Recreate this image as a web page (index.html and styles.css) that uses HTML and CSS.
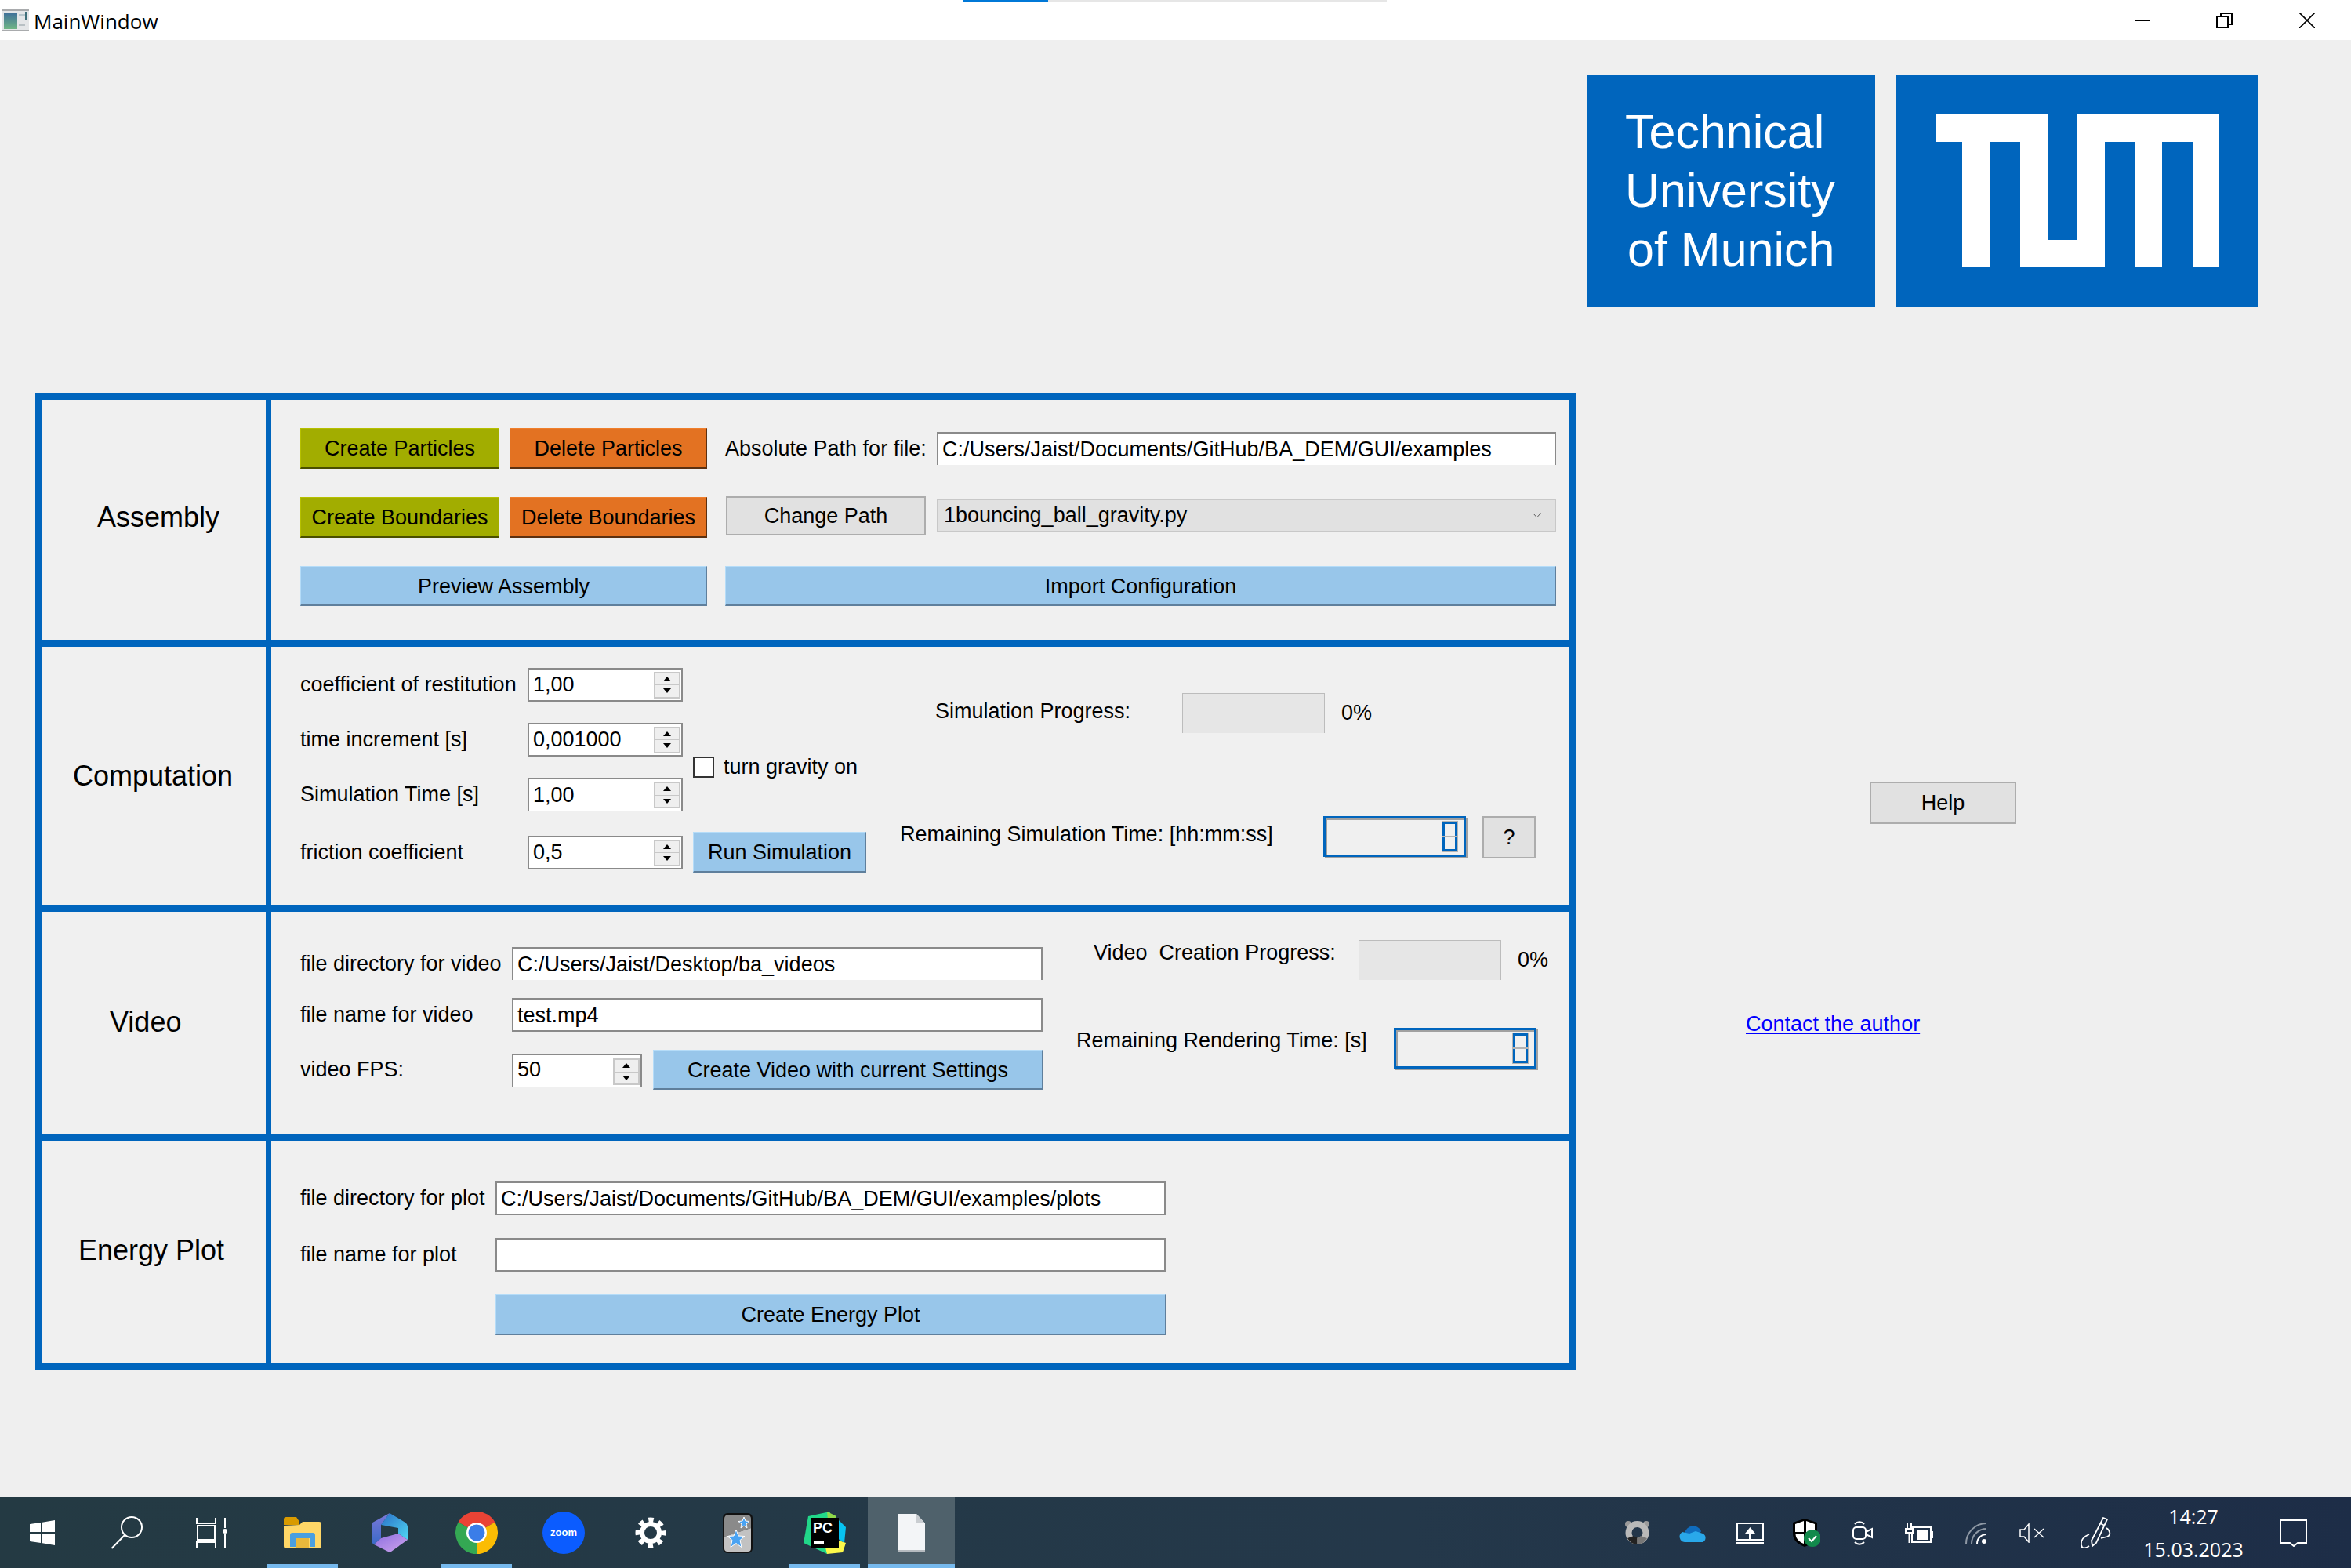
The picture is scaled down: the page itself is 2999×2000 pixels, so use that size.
FILE: index.html
```html
<!DOCTYPE html>
<html lang="en">
<head>
    <meta charset="UTF-8">
    <title>MainWindow</title>
    <link rel="stylesheet" href="styles.css">
</head>
<body>
    <div class="top-strip"><span class="strip-blue"></span><span class="strip-grey"></span></div>

    <header class="titlebar">
        <svg class="app-icon" width="35" height="29" viewBox="0 0 35 29">
            <defs><linearGradient id="appGrad" x1="0" y1="0" x2="0" y2="1"><stop offset="0" stop-color="#3f6f9a"/><stop offset="1" stop-color="#6fb585"/></linearGradient></defs>
            <rect width="35" height="29" fill="#e4e6e8"/>
            <rect width="35" height="3" fill="#a9abad"/>
            <rect y="27" width="35" height="2" fill="#a9abad"/>
            <rect x="3" y="5" width="17" height="21" fill="url(#appGrad)"/>
            <rect x="22" y="7" width="9" height="2" fill="#b8c6cc"/>
            <rect x="30" y="4" width="3" height="11" fill="#3f6f7a"/>
            <rect x="22" y="20" width="8" height="2" fill="#b8c0c4"/>
        </svg>
        <span class="window-title">MainWindow</span>
        <div class="window-controls">
            <span class="win-btn"><svg width="20" height="20" viewBox="0 0 20 20"><path d="M0 10h20" stroke="#000" stroke-width="2"/></svg></span>
            <span class="win-btn"><svg width="21" height="20" viewBox="0 0 21 20" fill="none" stroke="#000" stroke-width="2"><rect x="1" y="5" width="14" height="14"/><path d="M6 5V1h14v14h-5"/></svg></span>
            <span class="win-btn"><svg width="20" height="20" viewBox="0 0 20 20"><path d="M0 0l20 20M20 0L0 20" stroke="#000" stroke-width="1.6"/></svg></span>
        </div>
    </header>

    <main class="client">
        <div class="logos">
            <div class="logo-text">Technical<br>University<br><span class="logo-last">of Munich</span></div>
            <div class="logo-mark">
                <svg width="462" height="295" viewBox="0 0 462 295">
                    <path fill="#fff" d="M50 50H193V210H231V50H412V245H379V85H339V245H305V85H266V245H158V85H119V245H84V85H50Z"/>
                </svg>
            </div>
        </div>

        <div class="workspace">
            <div class="panel">
                <section class="section sec-assembly">
                    <div class="sec-title title-assembly">Assembly</div>
                    <div class="sec-body assembly-grid">
                        <button class="btn btn-green">Create Particles</button>
                        <button class="btn btn-orange">Delete Particles</button>
                        <div class="label path-label">Absolute Path for file:</div>
                        <div class="field path-field">C:/Users/Jaist/Documents/GitHub/BA_DEM/GUI/examples</div>

                        <button class="btn btn-green">Create Boundaries</button>
                        <button class="btn btn-orange">Delete Boundaries</button>
                        <button class="btn btn-grey change-path">Change Path</button>
                        <div class="combo">1bouncing_ball_gravity.py
                            <svg width="11" height="7" viewBox="0 0 11 7"><path d="M.5.5l5 5.500 5-5.500" fill="none" stroke="#555" stroke-width="1"/></svg>
                        </div>

                        <button class="btn btn-blue preview">Preview Assembly</button>
                        <button class="btn btn-blue import">Import Configuration</button>
                    </div>
                </section>

                <section class="section sec-computation">
                    <div class="sec-title">Computation</div>
                    <div class="sec-body comp-body">
                        <div class="comp-grid">
                            <div class="label">coefficient of restitution</div>
                            <div class="spin"><span>1,00</span><div class="spin-btns"><i class="up"></i><i class="down"></i></div></div>

                            <div class="label">time increment [s]</div>
                            <div class="spin"><span>0,001000</span><div class="spin-btns"><i class="up"></i><i class="down"></i></div></div>
                            <label class="gravity"><span class="check"></span>turn gravity on</label>

                            <div class="label">Simulation Time [s]</div>
                            <div class="spin spin-cut"><span>1,00</span><div class="spin-btns"><i class="up"></i><i class="down"></i></div></div>

                            <div class="label">friction coefficient</div>
                            <div class="spin spin-last"><span>0,5</span><div class="spin-btns"><i class="up"></i><i class="down"></i></div></div>
                            <button class="btn btn-blue run">Run Simulation</button>
                        </div>
                        <div class="comp-status">
                            <div class="status-row sim-progress">
                                <div class="label">Simulation Progress:</div>
                                <div class="progress"></div>
                                <div class="percent">0%</div>
                            </div>
                            <div class="status-row sim-remaining">
                                <div class="label">Remaining Simulation Time: [hh:mm:ss]</div>
                                <div class="lcd"><div class="lcd-digit"><b></b><b></b></div></div>
                                <button class="btn btn-grey question">?</button>
                            </div>
                        </div>
                    </div>
                </section>

                <section class="section sec-video">
                    <div class="sec-title title-video">Video</div>
                    <div class="sec-body video-body">
                        <div class="video-grid">
                            <div class="label">file directory for video</div>
                            <div class="field field-cut wide">C:/Users/Jaist/Desktop/ba_videos</div>
                            <div class="label">file name for video</div>
                            <div class="field wide">test.mp4</div>
                            <div class="label">video FPS:</div>
                            <div class="spin spin-cut fps"><span>50</span><div class="spin-btns"><i class="up"></i><i class="down"></i></div></div>
                            <button class="btn btn-blue">Create Video with current Settings</button>
                        </div>
                        <div class="video-status">
                            <div class="status-row video-progress">
                                <div class="label">Video&nbsp; Creation Progress:</div>
                                <div class="progress"></div>
                                <div class="percent">0%</div>
                            </div>
                            <div class="status-row video-remaining">
                                <div class="label">Remaining Rendering Time: [s]</div>
                                <div class="lcd"><div class="lcd-digit"><b></b><b></b></div></div>
                            </div>
                        </div>
                    </div>
                </section>

                <section class="section sec-energy">
                    <div class="sec-title title-energy">Energy Plot</div>
                    <div class="sec-body energy-grid">
                        <div class="label">file directory for plot</div>
                        <div class="field">C:/Users/Jaist/Documents/GitHub/BA_DEM/GUI/examples/plots</div>
                        <div class="label">file name for plot</div>
                        <div class="field"></div>
                        <button class="btn btn-blue energy-btn">Create Energy Plot</button>
                    </div>
                </section>
            </div>

            <aside class="side">
                <button class="btn btn-grey help">Help</button>
                <a class="contact" href="#">Contact the author</a>
            </aside>
        </div>
    </main>

    <footer class="taskbar">
        <div class="task-start">
            <span class="slot-fixed"><svg width="32" height="32" viewBox="0 0 32 32" fill="#fff"><path d="M0 5l14-2v12H0zM16 2.700L32 0v15H16zM0 17h14v12l-14-2zM16 17h16v15l-16-2.700z"/></svg></span>
            <span class="slot-fixed"><svg width="42" height="42" viewBox="0 0 42 42" fill="none" stroke="#fff" stroke-width="2"><circle cx="27" cy="14" r="13"/><path d="M18 24L1.500 41"/></svg></span>
            <span class="slot-fixed"><svg width="40" height="40" viewBox="0 0 40 40" fill="none" stroke="#fff" stroke-width="2"><path d="M1 1v7h24V1M2 11h22v18H2zM1 39v-7h24v7M37 1v13M37 22v17"/><circle cx="37" cy="18" r="3" fill="#fff" stroke="none"/></svg></span>
        </div>
        <div class="task-apps">
            <span class="slot running">
                <svg width="48" height="40" viewBox="0 0 48 40">
                    <path fill="#d99b00" d="M0 3a3 3 0 0 1 3-3h13l4 6v4H0z"/>
                    <path fill="#ffd767" d="M0 11l20-1 4-4h21a3 3 0 0 1 3 3v28a3 3 0 0 1-3 3H3a3 3 0 0 1-3-3z"/>
                    <path fill="#4a9fe0" d="M8 38V23a3 3 0 0 1 3-3h26a3 3 0 0 1 3 3v15h-7V27H15v11z"/>
                    <rect x="16" y="27" width="16" height="13" fill="#e8b83c"/>
                </svg>
            </span>
            <span class="slot">
                <svg width="46" height="50" viewBox="0 0 46 50">
                    <defs>
                        <linearGradient id="ribbonA" x1="0" y1="0" x2="1" y2="1"><stop offset="0" stop-color="#2a6fc8"/><stop offset="1" stop-color="#4fd6f2"/></linearGradient>
                        <linearGradient id="ribbonB" x1="0" y1="0" x2="0" y2="1"><stop offset="0" stop-color="#7c78d8"/><stop offset="1" stop-color="#3a6ac8"/></linearGradient>
                        <linearGradient id="ribbonC" x1="0" y1="0" x2="1" y2="1"><stop offset="0" stop-color="#8a6ee0"/><stop offset="1" stop-color="#cfa4ec"/></linearGradient>
                    </defs>
                    <path fill="url(#ribbonB)" d="M3 11L23 0 12 15V32L3 40Q0 38 0 35V15Q0 12 3 11z"/>
                    <path fill="url(#ribbonA)" d="M23 0L43 12Q46 14 46 17V34L34 26V19L12 15z"/>
                    <path fill="url(#ribbonC)" d="M12 32L34 26 46 34 25 49Q23 50 21 49L3 40z"/>
                </svg>
            </span>
            <span class="slot running">
                <svg width="54" height="54" viewBox="0 0 54 54">
                    <path fill="#ea4335" d="M27 27L3.600 13.500A27 27 0 0 1 50.400 13.500z"/>
                    <path fill="#fbbc04" d="M27 27L50.400 13.500A27 27 0 0 1 27 54z"/>
                    <path fill="#34a853" d="M27 27L27 54A27 27 0 0 1 3.600 13.500z"/>
                    <circle cx="27" cy="27" r="13" fill="#fff"/>
                    <circle cx="27" cy="27" r="10.500" fill="#3b7de8"/>
                </svg>
            </span>
            <span class="slot">
                <svg width="54" height="54" viewBox="0 0 54 54">
                    <circle cx="27" cy="27" r="27" fill="#0b5cff"/>
                    <text x="27" y="31" text-anchor="middle" class="zoom-text">zoom</text>
                </svg>
            </span>
            <span class="slot">
                <svg width="40" height="40" viewBox="0 0 40 40" fill="none" stroke="#fff">
                    <circle cx="20" cy="20" r="11" stroke-width="6"/>
                    <circle cx="20" cy="20" r="16" stroke-width="7" stroke-dasharray="6.280 6.280" stroke-dashoffset="3.140"/>
                </svg>
            </span>
            <span class="slot">
                <svg width="38" height="51" viewBox="0 0 38 51">
                    <rect width="38" height="51" rx="6" fill="#111"/>
                    <path d="M2 24V7a5 5 0 0 1 5-5h24a5 5 0 0 1 5 5v12L2 30z" fill="#8a8a8a"/>
                    <path d="M2 30l34-11v26a4 4 0 0 1-4 4H6a4 4 0 0 1-4-4z" fill="#c2c2c2"/>
                    <path fill="#4aa3f2" stroke="#fff" stroke-width="1" d="M27 5l2 5 5 .5-4 3.500 1 5-4-3-4 3 1-5-4-3.500 5-.5zM17 21l3 8 8 .5-6 5 2 9-7-5-7 5 2-9-6-5 8-.5z"/>
                </svg>
            </span>
            <span class="slot running">
                <svg width="54" height="54" viewBox="0 0 54 54">
                    <path fill="#21d789" d="M6 6L34 0l-4 54L0 40z"/>
                    <path fill="#fcf84a" d="M24 30l30 10-4 12-20 2z"/>
                    <path fill="#07c3f2" d="M40 6l14 14-2 20-12-8z"/>
                    <path fill="#8fd84a" d="M30 0l12 6v16l-10 0z"/>
                    <rect x="9" y="8" width="36" height="38" fill="#000"/>
                    <text x="12" y="27" class="pc-text">PC</text>
                    <rect x="13" y="38" width="13" height="3" fill="#fff"/>
                </svg>
            </span>
            <span class="slot active">
                <svg width="35" height="48" viewBox="0 0 35 48">
                    <path fill="#f3f5f7" d="M0 0h24l11 12v36H0z"/>
                    <path fill="#c9cdd1" d="M24 0l11 12H24z"/>
                    <rect y="46" width="35" height="2" fill="#b6bbc0"/>
                </svg>
            </span>
        </div>
        <div class="tray">
            <span class="tray-slot">
                <svg width="33" height="30" viewBox="0 0 33 30">
                    <circle cx="5" cy="4" r="4" fill="#9a9a9a"/><circle cx="28" cy="4" r="4" fill="#9a9a9a"/>
                    <circle cx="16.500" cy="15" r="11" fill="none" stroke="#b9b9b9" stroke-width="8"/>
                    <path d="M16.500 30A15 15 0 0 1 4 22l8-3a6 6 0 0 0 4.500 2z" fill="#222"/>
                    <path d="M16.500 30A15 15 0 0 0 29 22l-8-3a6 6 0 0 1-4.500 2z" fill="#777"/>
                </svg>
            </span>
            <span class="tray-slot">
                <svg width="36" height="23" viewBox="0 0 36 23">
                    <path fill="#0f6cbd" d="M7 12a11 11 0 0 1 21-3l-4 8H7z"/>
                    <path fill="#29a8ea" d="M7 23a7 7 0 0 1-3-13l9 2 8-3 9 3a6 6 0 0 1 0 11z"/>
                </svg>
            </span>
            <span class="tray-slot">
                <svg width="35" height="27" viewBox="0 0 35 27" fill="none" stroke="#fff" stroke-width="2">
                    <rect x="1" y="1" width="33" height="21"/>
                    <path d="M0 26h35" stroke-width="2"/>
                    <path d="M17.500 22V10" stroke-width="3"/>
                    <path d="M11 14l6.500-8 6.500 8z" fill="#fff" stroke="none"/>
                </svg>
            </span>
            <span class="tray-slot">
                <svg width="35" height="36" viewBox="0 0 35 36">
                    <path fill="#000" d="M15 0l16 5v14c0 9-8 14-16 17C7 33 0 28 0 19V5z"/>
                    <path fill="#fff" d="M14 3v14H3V7zM17 3l11 4v10H17zM14 20v12C9 30 4 26 3.500 20zM17 20h8v12l-8 1z"/>
                    <circle cx="25" cy="25" r="11" fill="#128a4c"/>
                    <path d="M20 25l4 4 6-7" fill="none" stroke="#fff" stroke-width="2"/>
                </svg>
            </span>
            <span class="tray-slot">
                <svg width="26" height="33" viewBox="0 0 26 33" fill="none" stroke="#fff" stroke-width="2">
                    <rect x="1" y="9" width="16" height="15" rx="4"/>
                    <path d="M17 15l8-4v11l-8-4z"/>
                    <path d="M3 5a8 8 0 0 1 12 0M3 28a8 8 0 0 0 12 0"/>
                </svg>
            </span>
            <span class="tray-slot">
                <svg width="36" height="25" viewBox="0 0 36 25" fill="none" stroke="#fff" stroke-width="2">
                    <rect x="9" y="5" width="24" height="19"/>
                    <rect x="16" y="8" width="14" height="13" fill="#fff" stroke="none"/>
                    <rect x="33" y="10" width="3" height="9" fill="#fff" stroke="none"/>
                    <path d="M3 0v6M8 0v6M1 7h9v5H1zM5.500 12v13" fill="#1e2f44"/>
                </svg>
            </span>
            <span class="tray-slot">
                <svg width="27" height="27" viewBox="0 0 27 27" fill="none" stroke-width="2">
                    <path d="M1 27A26 26 0 0 1 27 1" stroke="#8e98a4"/>
                    <path d="M8 27A19 19 0 0 1 27 8" stroke="#8e98a4"/>
                    <path d="M15 27A12 12 0 0 1 27 15" stroke="#fff"/>
                    <circle cx="24" cy="24" r="3" fill="#fff"/>
                </svg>
            </span>
            <span class="tray-slot">
                <svg width="32" height="25" viewBox="0 0 32 25" fill="none" stroke="#fff" stroke-width="1.500">
                    <path d="M1 8h5l6-7v23l-6-7H1zM19 7l12 11M31 7L19 18"/>
                </svg>
            </span>
            <span class="tray-slot pen">
                <svg width="40" height="40" viewBox="0 0 40 40" fill="none" stroke="#fff" stroke-width="1.800">
                    <path d="M30 1l5 2-14 30-5 4-1-7zM26 8l6 3"/>
                    <path d="M12 22C5 25 1 30 2 36s7 3 10 1M34 14c5 3 6 9 1 11l-8 2"/>
                </svg>
            </span>
            <div class="clock"><span>14:27</span><span>15.03.2023</span></div>
            <span class="tray-slot notify">
                <svg width="35" height="35" viewBox="0 0 35 35" fill="none" stroke="#fff" stroke-width="2">
                    <path d="M1 1h33v29H23l-5 4-5-4H1z"/>
                </svg>
            </span>
            <span class="show-desktop"></span>
        </div>
    </footer>
</body>
</html>
```

FILE: styles.css
```css
* {
    box-sizing: border-box;
}
body {
    margin: 0;
    width: 2999px;
    height: 2000px;
    overflow: hidden;
    display: flex;
    flex-direction: column;
    font-family: "Liberation Sans", Arial, sans-serif;
    font-size: 27px;
    color: #000;
    background: #f0f0f0;
}

/* title bar */
.top-strip {
    position: absolute;
    top: 0;
    left: 1229px;
    display: flex;
    height: 2px;
}
.strip-blue {
    width: 108px;
    background: #0078d7;
}
.strip-grey {
    width: 432px;
    background: #e6e6e6;
}
.titlebar {
    height: 51px;
    flex: none;
    display: flex;
    align-items: center;
    background: #fff;
    padding-left: 2px;
}
.app-icon {
    margin-right: 6px;
}
.window-title {
    font-family: "Open Sans", sans-serif;
    font-size: 26px;
    line-height: 1;
    margin-top: 2px;
}
.window-controls {
    margin-left: auto;
    display: flex;
    padding-right: 4px;
}
.win-btn {
    width: 105px;
    height: 51px;
    display: flex;
    align-items: center;
    justify-content: center;
}

/* main area */
.client {
    height: 1859px;
    flex: none;
    background: #efefef;
    padding-top: 45px;
}
.logos {
    display: flex;
    gap: 27px;
    margin-left: 2024px;
    height: 295px;
}
.logo-text {
    width: 368px;
    padding: 35px 0 0 49px;
    background: #0065bd;
    color: #fff;
    font-size: 61px;
    line-height: 75px;
}
.logo-last {
    margin-left: 3px;
}
.logo-mark {
    width: 462px;
    background: #0065bd;
}
.logo-mark svg {
    display: block;
}
.workspace {
    display: flex;
    margin-top: 110px;
    padding-left: 45px;
}

/* the framed panel */
.panel {
    width: 1966px;
    height: 1247px;
    border: 9px solid #0065bd;
    background: #f0f0f0;
}
.section {
    display: flex;
}
.section + .section {
    border-top: 9px solid #0065bd;
}
.sec-assembly {
    height: 306px;
}
.sec-computation {
    height: 338px;
}
.sec-video {
    height: 292px;
}
.sec-energy {
    height: 293px;
}
.sec-title {
    width: 292px;
    flex: none;
    display: flex;
    align-items: center;
    padding-left: 39px;
    border-right: 7px solid #0065bd;
    font-size: 36px;
}
.title-assembly {
    padding: 0 0 6px 70px;
}
.title-video {
    padding: 0 0 1px 86px;
}
.title-energy {
    padding: 0 0 4px 46px;
}
.sec-body {
    flex: 1;
    padding-left: 37px;
}

/* widgets */
.label {
    display: flex;
    align-items: center;
    white-space: nowrap;
    line-height: 1;
}
.btn {
    font: inherit;
    color: #000;
    padding: 2px 0 0;
    white-space: nowrap;
    border-style: solid;
    border-width: 1px 1px 2px 1px;
}
.btn-green {
    background: #a2ad00;
    border-color: #b6c000 #5c6200 #4a4f00 #b6c000;
}
.btn-orange {
    background: #e37222;
    border-color: #f07f2c #5c3010 #5c3010 #f07f2c;
}
.btn-blue {
    background: #98c6ea;
    border-color: #b5dcf8 #5f7f9c #5f7f9c #b5dcf8;
}
.btn-grey {
    background: #e1e1e1;
    border: 2px solid #adadad;
    padding: 0;
}
.field {
    height: 43px;
    background: #fff;
    border: 2px solid #8a8a8a;
    padding-left: 5px;
    line-height: 40px;
    white-space: nowrap;
}
.field-cut,
.path-field {
    height: 42px;
    border-bottom: none;
}
.spin {
    height: 43px;
    display: flex;
    align-items: center;
    justify-content: space-between;
    background: #fff;
    border: 2px solid #8a8a8a;
    padding: 0 1px 0 5px;
}
.spin-cut {
    height: 42px;
    border-bottom: none;
    align-self: start;
}
.spin-btns {
    width: 34px;
    height: 34px;
    display: flex;
    flex-direction: column;
    border: 2px solid #c8c8c8;
    background: #efefef;
}
.spin-btns i {
    flex: 1;
    display: flex;
    align-items: center;
    justify-content: center;
}
.spin-btns .down {
    border-top: 1px solid #c8c8c8;
}
.up::before,
.down::before {
    content: "";
    border-left: 5px solid transparent;
    border-right: 5px solid transparent;
}
.up::before {
    border-bottom: 6px solid #000;
}
.down::before {
    border-top: 6px solid #000;
}
.combo {
    height: 43px;
    margin: 2px 0 0 12px;
    width: 790px;
    display: flex;
    align-items: center;
    justify-content: space-between;
    padding: 0 17px 0 7px;
    background: #e1e1e1;
    border: 2px solid #c8c8c8;
}
.check {
    width: 27px;
    height: 27px;
    flex: none;
    background: #fff;
    border: 2px solid #333;
    margin-right: 12px;
}
.gravity {
    display: flex;
    align-items: center;
    white-space: nowrap;
}
.progress {
    width: 182px;
    height: 51px;
    flex: none;
    background: #e6e6e6;
    border: 1px solid #bcbcbc;
    border-bottom: none;
}
.percent {
    margin-left: 21px;
    line-height: 1;
    align-self: center;
}
.lcd {
    width: 182px;
    height: 52px;
    flex: none;
    display: flex;
    justify-content: flex-end;
    align-items: center;
    padding-right: 8px;
    border: 3px solid #0065bd;
    box-shadow: inset 2px 2px 0 #a0a0a0, 2px 2px 0 #a0a0a0;
}
.lcd-digit {
    width: 19px;
    height: 38px;
    display: flex;
    flex-direction: column;
    justify-content: space-between;
}
.lcd-digit b {
    height: 18px;
    border: 3px solid #0065bd;
    box-shadow: 0 0 0 1px #b4b4b4;
}
.lcd-digit b:first-child {
    border-bottom: none;
}
.lcd-digit b:last-child {
    border-top: none;
}
.status-row {
    display: flex;
    align-items: stretch;
}

/* assembly */
.assembly-grid {
    display: grid;
    grid-template-columns: 254px 252px 255px 805px;
    grid-template-rows: 52px 52px 51px;
    column-gap: 13px;
    row-gap: 36px;
    padding-top: 36px;
    align-content: start;
}
.path-label {
    margin-left: 10px;
    margin-right: -15px;
}
.path-field {
    margin: 5px 0 0 12px;
    width: 790px;
}
.change-path {
    height: 50px;
    margin: -1px 0 0 11px;
    width: 255px;
    padding-top: 1px;
}
.preview {
    grid-column: 1 / 3;
}
.import {
    grid-column: 3 / 5;
    margin-left: 10px;
    width: 1060px;
}

/* computation */
.comp-body {
    display: flex;
}
.comp-grid {
    display: grid;
    grid-template-columns: 290px 198px 234px;
    grid-template-rows: 43px 43px 42px 52px;
    row-gap: 27px;
    padding-top: 27px;
    width: 722px;
    align-content: start;
}
.comp-grid .label {
    grid-column: 1;
}
.comp-grid .spin {
    grid-column: 2;
}
.gravity {
    grid-column: 3;
    grid-row: 2 / 4;
    margin-left: 13px;
}
.spin-last {
    margin-top: 5px;
}
.run {
    grid-column: 3;
    margin-left: 13px;
}
.comp-status {
    margin-left: 43px;
    padding-top: 59px;
}
.sim-progress .label {
    width: 360px;
    padding: 0 0 4px 45px;
}
.sim-remaining {
    margin-top: 106px;
}
.sim-remaining .label {
    width: 540px;
    align-self: flex-start;
    height: 46px;
}
.question {
    width: 68px;
    height: 54px;
    margin-left: 21px;
}

/* video */
.video-body {
    display: flex;
    align-items: flex-start;
}
.video-grid {
    display: grid;
    grid-template-columns: 270px 166px 14px 497px;
    grid-template-rows: 42px 43px 51px;
    row-gap: 23px;
    padding-top: 45px;
}
.video-grid .wide {
    grid-column: 2 / 5;
}
.video-grid .label {
    grid-column: 1;
}
.fps {
    grid-column: 2;
    margin-top: 5px;
}
.fps span {
    margin-bottom: 3px;
}
.video-grid .btn {
    grid-column: 4;
}
.fps .spin-btns {
    margin-top: 2px;
}
.video-status {
    margin-left: 43px;
    padding-top: 36px;
}
.video-progress .label {
    width: 360px;
    padding: 0 0 19px 22px;
}
.video-remaining {
    margin-top: 61px;
}
.video-remaining .label {
    width: 405px;
    padding-bottom: 19px;
}

/* energy */
.energy-grid {
    display: grid;
    grid-template-columns: 249px 855px;
    grid-template-rows: 43px 43px 52px;
    row-gap: 29px;
    padding-top: 52px;
    align-content: start;
}
.energy-btn {
    grid-column: 2;
}

/* right column */
.side {
    display: flex;
    flex-direction: column;
    align-items: flex-start;
    padding-top: 496px;
}
.help {
    width: 187px;
    height: 54px;
    margin-left: 374px;
}
.contact {
    margin: 239px 0 0 216px;
    color: #0000ff;
    line-height: 32px;
}

/* taskbar */
.taskbar {
    height: 90px;
    flex: none;
    display: flex;
    background: linear-gradient(90deg, #243a43, #24384a 60%, #1d2d47);
}
.task-start {
    display: flex;
}
.slot-fixed {
    width: 108px;
    display: flex;
    align-items: center;
    justify-content: center;
}
.task-apps {
    display: flex;
    margin-left: 6px;
}
.slot {
    position: relative;
    width: 111px;
    display: flex;
    align-items: center;
    justify-content: center;
}
.running::after,
.active::after {
    content: "";
    position: absolute;
    left: 10px;
    right: 10px;
    bottom: 0;
    height: 5px;
    background: #76b9ed;
}
.active {
    background: #4f616b;
}
.active::after {
    left: 0;
    right: 0;
}
.zoom-text {
    fill: #fff;
    font-family: "Liberation Sans", sans-serif;
    font-size: 13px;
    font-weight: bold;
}
.pc-text {
    fill: #fff;
    font-family: "Liberation Sans", sans-serif;
    font-size: 18px;
    font-weight: bold;
}
.tray {
    margin-left: auto;
    display: flex;
    color: #fff;
}
.tray-slot {
    width: 72px;
    display: flex;
    align-items: center;
    justify-content: center;
}
.pen {
    width: 90px;
}
.notify {
    width: 94px;
}
.clock {
    width: 160px;
    display: flex;
    flex-direction: column;
    align-items: center;
    justify-content: center;
    gap: 12px;
    font-family: "Open Sans", sans-serif;
    font-size: 25px;
    line-height: 30px;
}
.show-desktop {
    width: 27px;
    position: relative;
}
.show-desktop::after {
    content: "";
    position: absolute;
    left: 15px;
    top: 0;
    bottom: 0;
    width: 1px;
    background: #7a8694;
}
```
